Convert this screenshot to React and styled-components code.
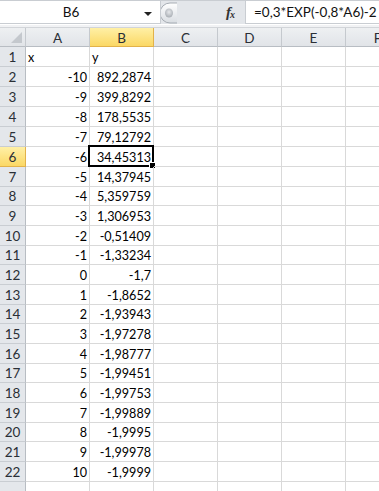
import React from "react";
import styled, { createGlobalStyle } from "styled-components";

const Global = createGlobalStyle`
  html, body { margin: 0; padding: 0; background: #ffffff; overflow: hidden; }
  body { font-family: Lato, "Open Sans", sans-serif; }
`;

const Page = styled.div`
  width: 379px;
  height: 491px;
  overflow: hidden;
  background: #ffffff;
  display: flex;
  flex-direction: column;
`;

const FormulaBar = styled.div`
  display: flex;
  align-items: stretch;
  height: 24px;
  background: #e3e6ea;
  border-top: 1px solid #c9cdd2;
  box-sizing: border-box;
  flex: none;
`;

const NameBox = styled.div`
  position: relative;
  width: 161px;
  flex: none;
  background: #ffffff;
  border-right: 1px solid #c9cdd2;
  border-bottom: 1px solid #c9cdd2;
  display: flex;
  align-items: center;
  justify-content: center;
  font-size: 13.5px;
  color: #111;
  padding-right: 18px;
  box-sizing: border-box;
`;

const DropArrow = styled.span`
  position: absolute;
  right: 8px;
  top: 11px;
  width: 0;
  height: 0;
  border-left: 4px solid transparent;
  border-right: 4px solid transparent;
  border-top: 4px solid #222;
`;

const Splitter = styled.div`
  width: 18px;
  flex: none;
  margin-left: -2px;
  display: flex;
  align-items: center;
`;

const Spacer = styled.div`
  flex: 1;
`;

const FxButton = styled.div`
  width: 16px;
  flex: none;
  display: flex;
  align-items: center;
  justify-content: center;
  font-family: "Liberation Serif", "DejaVu Serif", serif;
  font-style: italic;
  font-weight: bold;
  font-size: 15px;
  color: #333;
  letter-spacing: -1px;
  margin-right: 7px;
  small { font-size: 10px; margin-top: 4px; }
`;

const FormulaInput = styled.div`
  width: 134px;
  flex: none;
  background: #ffffff;
  border-left: 1px solid #c9cdd2;
  border-bottom: 1px solid #c9cdd2;
  box-sizing: border-box;
  display: flex;
  align-items: center;
  padding-left: 8px;
  font-size: 13.5px;
  color: #111;
  white-space: nowrap;
  overflow: hidden;
`;

const Gap = styled.div`
  height: 4px;
  flex: none;
  background: #f1f2f4;
  border-top: 1px solid #ffffff;
  border-bottom: 1px solid #d2d5d9;
  box-sizing: border-box;
`;

const Grid = styled.div`
  display: grid;
  grid-template-columns: 26px repeat(6, 64px);
  grid-template-rows: ${(p) => p.$rows};
  width: 410px;
`;

const Corner = styled.div`
  position: relative;
  background: linear-gradient(#eef0f2, #e1e4e8);
  border-right: 1px solid #c5c9ce;
  border-bottom: 1px solid #b8bdc3;
  box-sizing: border-box;
  &::after {
    content: "";
    position: absolute;
    right: 3px;
    bottom: 3px;
    width: 0;
    height: 0;
    border-left: 11px solid transparent;
    border-bottom: 11px solid #c4c8cd;
  }
`;

const ColHead = styled.div`
  background: ${(p) =>
    p.$active ? "linear-gradient(#fff0a6, #fbd865)" : "linear-gradient(#eef0f2, #e1e4e8)"};
  border-right: 1px solid ${(p) => (p.$active ? "#e2b24a" : "#c5c9ce")};
  border-bottom: 1px solid ${(p) => (p.$active ? "#e2b24a" : "#b8bdc3")};
  box-sizing: border-box;
  display: flex;
  align-items: center;
  justify-content: center;
  font-size: 13.5px;
  color: #2a2f36;
  padding-top: 1px;
`;

const RowHead = styled.div`
  background: ${(p) => (p.$active ? "linear-gradient(#fff0a6, #fbd865)" : "#e4e7eb")};
  border-right: 1px solid ${(p) => (p.$active ? "#e2b24a" : "#b8bdc3")};
  border-bottom: 1px solid ${(p) => (p.$active ? "#e2b24a" : "#c9cdd2")};
  box-sizing: border-box;
  display: flex;
  align-items: center;
  justify-content: center;
  font-size: 13.5px;
  color: #2a2f36;
`;

const Cell = styled.div`
  position: relative;
  min-width: 0;
  border-right: 1px solid #d9d9d9;
  border-bottom: 1px solid #d9d9d9;
  box-sizing: border-box;
  display: flex;
  align-items: center;
  justify-content: ${(p) => (p.$right ? "flex-end" : "flex-start")};
  padding: 1px 2px 0 2px;
  font-size: 12.6px;
  color: #000;
  white-space: nowrap;
`;

const Selection = styled.div`
  position: absolute;
  left: -2px;
  top: -2px;
  right: -1px;
  bottom: -1px;
  border: 2px solid #000;
  pointer-events: none;
  &::after {
    content: "";
    position: absolute;
    right: -4px;
    bottom: -4px;
    width: 5px;
    height: 5px;
    background: #000;
    border: 1px solid #fff;
  }
`;

const ys = [
  "892,2874", "399,8292", "178,5535", "79,12792", "34,45313", "14,37945",
  "5,359759", "1,306953", "-0,51409", "-1,33234", "-1,7", "-1,8652",
  "-1,93943", "-1,97278", "-1,98777", "-1,99451", "-1,99753", "-1,99889",
  "-1,9995", "-1,99978", "-1,9999",
];

const cols = ["A", "B", "C", "D", "E", "F"];
const short = new Set([8, 11, 14, 17, 20]);
const rowHeights = Array.from({ length: 23 }, (_, i) =>
  short.has(i + 1) ? 19 : 20
);

export default function App() {
  const rows = [];
  for (let r = 1; r <= 23; r++) {
    const active = r === 6;
    rows.push(
      <RowHead key={`h${r}`} $active={active}>
        {r <= 22 ? r : null}
      </RowHead>
    );
    cols.forEach((c) => {
      let content = null;
      let right = false;
      if (r === 1 && c === "A") content = "x";
      if (r === 1 && c === "B") content = "y";
      if (r >= 2 && r <= 22 && c === "A") {
        content = String(r - 12);
        right = true;
      }
      if (r >= 2 && r <= 22 && c === "B") {
        content = ys[r - 2];
        right = true;
      }
      rows.push(
        <Cell key={`${c}${r}`} $right={right}>
          {content}
          {active && c === "B" && <Selection />}
        </Cell>
      );
    });
  }

  return (
    <Page>
      <Global />
      <FormulaBar>
        <NameBox>
          B6
          <DropArrow />
        </NameBox>
        <Splitter>
          <svg width="18" height="22" viewBox="0 0 18 22">
            <defs>
              <linearGradient id="sg" x1="0" y1="0" x2="0" y2="1">
                <stop offset="0" stopColor="#ffffff" />
                <stop offset="1" stopColor="#d9dde2" />
              </linearGradient>
              <radialGradient id="dot" cx="0.5" cy="0.4" r="0.6">
                <stop offset="0" stopColor="#e6e8eb" />
                <stop offset="1" stopColor="#a9aeb4" />
              </radialGradient>
            </defs>
            <path d="M18 1 H11 A10 10 0 0 0 11 21 H18" fill="url(#sg)" stroke="#a7adb4" />
            <ellipse cx="10" cy="11" rx="4" ry="4.5" fill="url(#dot)" />
          </svg>
        </Splitter>
        <Spacer />
        <FxButton>
          f<small>x</small>
        </FxButton>
        <FormulaInput>=0,3*EXP(-0,8*A6)-2</FormulaInput>
      </FormulaBar>
      <Gap />
      <Grid $rows={`19px ${rowHeights.map((h) => h + "px").join(" ")}`}>
        <Corner />
        {cols.map((c) => (
          <ColHead key={c} $active={c === "B"}>
            {c}
          </ColHead>
        ))}
        {rows}
      </Grid>
    </Page>
  );
}
